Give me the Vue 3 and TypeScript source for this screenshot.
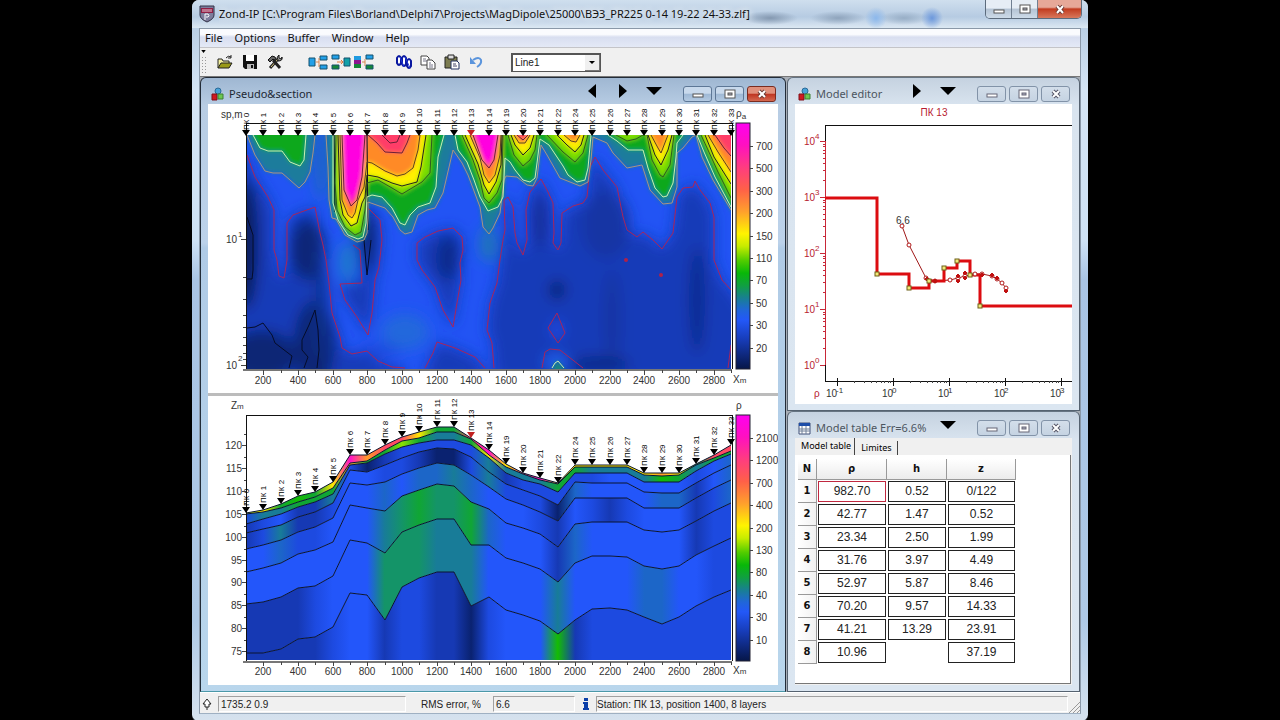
<script setup lang="ts">
import { ref } from 'vue'

type Pt = [number, number]

const line = ref('Line1')
const menus = ['File', 'Options', 'Buffer', 'Window', 'Help']

const parse = (s: string): Pt[] =>
  s.trim().split(/\s+/).map((p) => p.split(',').map(Number) as Pt)
const open = (s: string) => 'M' + s.trim().replace(/\s+/g, 'L')
const closed = (s: string) => open(s) + 'Z'
const capped = (s: string) => {
  const p = parse(s)
  return `M${p[0][0]},110L${s.trim().replace(/\s+/g, 'L')}L${p[p.length - 1][0]},110Z`
}

const stationNames = [
  0, 1, 2, 3, 4, 5, 6, 7, 8, 9, 10, 11, 12, 13, 14, 19, 20, 21, 22, 24, 25, 26, 27, 28, 29, 30, 31, 32, 33,
]
const sx = (i: number) => Math.round(246 + (i * 485) / 28)
const xLabels = Array.from({ length: 14 }, (_, i) => ({ x: sx(i * 2 + 1), text: String((i + 1) * 200) }))

/* resistivity levels of the pseudosection, from the outermost contour inwards */
interface Level { fill: string; stroke: string; shapes: string[] }
const levels: Level[] = [
  {
    fill: '#1c7c9c', stroke: '#a89482', shapes: [
      '247,135 255,155 265,171 273,173 282,173 290,180 299,188 305,182 310,172 313,153 315,135',
      '326,135 328,167 329,200 332,218 336,219 345,235 357,242 364,240 367,233 368,217 368,202 385,208 393,217 400,230 405,234 412,232 418,215 427,210 435,208 443,193 453,150 462,163 468,175 480,207 483,227 489,234 493,228 500,213 504,180 506,176 517,177 527,185 533,186 537,178 541,145 547,155 560,178 580,186 588,182 591,160 593,137 607,143 613,153 627,168 642,165 650,190 663,204 672,203 677,187 677,153 683,148 692,137 696,135 702,157 713,180 731,210 745,225',
    ],
  },
  {
    fill: '#10a81c', stroke: '#c9f0b0', shapes: [
      '253,135 260,148 268,151 282,151 290,162 300,166 304,160 306,135',
      '333,135 333,203 338,220 348,235 358,239 363,237 366,223 367,197 372,195 382,197 392,208 400,223 405,225 410,215 418,207 430,203 436,187 438,157 444,135',
      '455,135 458,150 467,162 474,180 480,197 488,211 498,207 503,197 505,158 510,162 515,170 523,180 530,182 535,178 537,163 540,139 549,145 563,166 568,175 577,182 585,180 588,168 591,135',
      '608,135 617,141 628,150 643,150 648,168 655,188 663,197 667,196 673,183 676,157 677,143 683,135',
      '697,135 704,152 715,177 731,207 745,222',
    ],
  },
  {
    fill: '#7ede00', stroke: '#2f5a20', shapes: [
      '336,135 335,183 337,210 345,227 355,235 361,232 365,210 367,183 378,180 392,188 402,194 412,188 422,182 430,173 432,135',
      '462,135 473,160 480,180 484,198 489,203 497,193 502,180 503,135',
      '508,135 514,155 523,166 530,160 535,150 537,135',
      '547,135 563,152 575,162 583,153 588,135',
      '616,135 627,141 636,139 643,135',
      '647,135 652,160 660,175 663,177 670,165 674,135',
      '701,135 708,150 718,172 731,198 745,214',
    ],
  },
  {
    fill: '#fff000', stroke: '#222', shapes: [
      '338,135 340,200 343,215 351,226 357,223 362,203 365,197 367,175 378,177 392,183 402,186 417,182 421,167 426,135',
      '465,135 478,164 484,185 489,194 496,182 501,165 502,135',
      '511,135 515,145 523,155 530,148 534,135',
      '557,135 567,145 575,152 581,145 584,135',
      '648,135 655,155 661,165 668,150 672,135',
      '705,135 714,157 731,184 745,200',
    ],
  },
  {
    fill: '#ff8a26', stroke: '#5e4020', shapes: [
      '340,135 342,200 348,215 352,218 355,213 358,200 364,187 367,162 372,163 385,171 397,176 405,174 413,168 418,150 420,135',
      '470,135 480,158 484,175 489,183 495,175 500,155 501,135',
      '514,135 519,143 525,143 530,135',
      '564,135 571,141 576,142 580,135',
      '651,135 658,148 661,153 666,140 668,135',
      '708,135 718,152 731,172 745,186',
    ],
  },
  {
    fill: '#ff3c68', stroke: '#6b1f38', shapes: [
      '342,135 344,190 351,206 357,200 362,177 365,135',
      '368,135 377,143 385,152 402,153 407,143 410,135',
      '473,135 482,160 489,168 494,160 498,135',
      '517,135 523,140 528,135',
      '715,135 724,148 731,156 745,168',
    ],
  },
  {
    fill: '#ff00e0', stroke: 'none', shapes: [
      '343,135 344,185 351,204 357,192 362,172 365,135',
      '475,135 483,158 489,166 494,155 498,135',
    ],
  },
]
const innerPeak = '382,135 390,143 397,142 400,135'

const edgeLeft = '247,155 255,177 268,197 274,210 274,250 277,260 279,276 284,278 287,260 287,223 293,215 315,207 320,233 323,245 326,260 329,283 332,313 340,337 342,348 352,354 367,351 378,361 392,367 405,368'
const edgeRight = '494,368 492,343 487,330 490,303 497,283 500,260 503,240 505,230 504,200 508,197 513,207 515,233 517,243 523,255 527,240 526,210 530,192 541,179 548,192 553,203 554,233 553,243 558,250 561,243 562,213 573,206 583,203 587,197 590,167 595,157 603,170 617,187 623,217 627,230 637,237 643,232 653,240 662,249 673,233 677,197 683,188 693,187 695,181 700,190 710,203 714,217 714,260 722,280 731,290'
const wedge = '353,245 360,250 362,283 340,284 345,300 357,317 368,335 372,313 375,280 379,267 382,240 380,220 368,208'
const pocket = '417,247 417,243 425,237 438,231 453,228 462,237 463,250 460,263 461,280 458,297 453,327 443,310 435,287 422,270 417,260'
const foot = '425,368 433,353 437,342 455,348 475,357 485,368'
const diamond = '557,313 565,333 558,343 548,328'
const vent = '542,368 545,352 550,349 560,350 583,368'

const darkAreas = [
  closed(edgeLeft + ' 405,380 230,380 230,150'),
  closed(edgeRight + ' 745,310 745,380 494,380'),
  closed(wedge), closed(pocket), closed(foot + ' 485,380 425,380'),
]
const redLines = [open(edgeLeft), open(edgeRight), open(wedge), closed(pocket), open(foot), closed(diamond), open(vent), open('728,368 731,345')]
const blackLines = [
  open('247,217 253,235 253,270 252,279 247,279'),
  open('247,328 255,327 263,323 272,335 275,343 292,356 289,368'),
  open('304,368 308,357 302,350 302,340 309,325 315,310 318,330 319,350 317,368'),
  open('364,240 367,275 371,240'),
  open('367,135 368,230'), open('334,135 335,212'),
]
const blobs = [
  { x: 246, y: 245, rx: 12, ry: 64, c: '#071a58' }, { x: 308, y: 250, rx: 18, ry: 30, c: '#0c2878' },
  { x: 314, y: 345, rx: 20, ry: 44, c: '#0c2674' }, { x: 262, y: 356, rx: 34, ry: 26, c: '#0c2674' },
  { x: 368, y: 238, rx: 5, ry: 32, c: '#061440' }, { x: 448, y: 258, rx: 12, ry: 22, c: '#0e2c8c' },
  { x: 557, y: 290, rx: 8, ry: 10, c: '#0a2470' }, { x: 540, y: 222, rx: 8, ry: 26, c: '#122f9c' },
  { x: 606, y: 225, rx: 24, ry: 34, c: '#1434a4' }, { x: 697, y: 300, rx: 8, ry: 54, c: '#102c90' },
  { x: 612, y: 320, rx: 9, ry: 50, c: '#1434a4' }, { x: 600, y: 364, rx: 30, ry: 8, c: '#102a88' },
  { x: 347, y: 262, rx: 7, ry: 20, c: '#1f80c4' }, { x: 405, y: 332, rx: 24, ry: 18, c: '#2068dc' },
  { x: 488, y: 244, rx: 7, ry: 18, c: '#1c7cac' }, { x: 321, y: 160, rx: 7, ry: 40, c: '#1c68c0' },
  { x: 557, y: 330, rx: 5, ry: 10, c: '#2450f0' }, { x: 556, y: 362, rx: 12, ry: 8, c: '#2360f0' },
  { x: 320, y: 300, rx: 5, ry: 60, c: '#0f3090' }, { x: 380, y: 350, rx: 20, ry: 6, c: '#1c48dc' },
]

/* layer boundaries of the model section, one height per station */
const bounds: number[][] = [
  [513, 510, 504, 496, 492, 482, 455, 455, 445, 437, 432, 427, 427, 438, 450, 464, 473, 478, 483, 465, 465, 465, 465, 473, 473, 473, 464, 455, 445],
  [514, 512, 508, 502, 497, 488, 463, 461, 450, 441, 438, 432, 432, 439, 455, 467, 474, 480, 484, 467, 467, 467, 467, 475, 476, 475, 465, 458, 451],
  [524, 519, 514, 507, 502, 494, 465, 463, 454, 447, 443, 440, 440, 445, 458, 473, 480, 484, 492, 473, 473, 473, 473, 482, 482, 482, 471, 461, 454],
  [533, 529, 525, 517, 512, 503, 470, 472, 465, 458, 452, 448, 449, 457, 472, 484, 490, 496, 505, 482, 483, 483, 483, 492, 493, 493, 483, 473, 465],
  [549, 545, 540, 532, 527, 518, 483, 485, 482, 474, 468, 463, 465, 475, 487, 499, 505, 512, 521, 498, 498, 498, 498, 508, 508, 508, 498, 488, 480],
  [572, 568, 563, 554, 550, 542, 505, 508, 511, 496, 490, 484, 486, 502, 509, 523, 528, 534, 547, 524, 522, 522, 522, 530, 532, 530, 521, 511, 503],
  [604, 602, 597, 588, 586, 576, 540, 543, 553, 532, 525, 519, 519, 545, 545, 558, 563, 569, 582, 563, 556, 556, 557, 566, 569, 566, 555, 546, 538],
  [653, 653, 649, 639, 637, 627, 593, 595, 620, 587, 578, 572, 572, 606, 597, 610, 615, 621, 634, 620, 609, 608, 610, 617, 624, 617, 606, 597, 590],
]
const palette: Record<string, string> = {
  n: '#0a2270', d: '#1639b4', b: '#1d4ae0', B: '#2356fa', s: '#1c66c8', t: '#187c98', e: '#149468',
  g: '#10a634', G: '#14bc04', l: '#8ae000', y: '#ffe800', o: '#ff9a28', r: '#ff4a64', m: '#ff10c8',
}
const layerTones = [
  'lygGgymorryggrmyrmyyyyyyoygrr',
  'bttgggogglgttgytttggttttGgtgg',
  'dbBddtbndbbbbbtdbbbbbBBBBBbBs',
  'dbtddbBBbbdnnbtbbbnsBBBBssdBs',
  'BBsbbBBBsBsstsBBBbdBbdbBBBdbs',
  'BBBBBBBBtegeegsBBBdsBBBBBBdbb',
  'ddddbBBBeeetttBBBBtBBBBssBBbb',
  'dddddbBBdbbddnbBBBGdbbbbbbbbb',
]
const layers = layerTones.map((tones, k) => {
  const top = bounds[k].map((y, i) => `${sx(i)},${y}`)
  const low = (bounds[k + 1] ?? bounds[k].map(() => 660)).map((y, i) => `${sx(i)},${y}`).reverse()
  return {
    id: `tone${k}`,
    stops: [...tones].map((c, i) => ({ at: `${(i * 100) / 28}%`, color: palette[c] })),
    points: [...top, ...low].join(' '),
    edge: top.join(' '),
  }
})

const scale = [
  [0, '#ff00f0'], [9, '#ff10c0'], [18, '#ff3c80'], [27, '#ff6048'], [36, '#ffa02c'], [45, '#fff400'], [50, '#c8ec00'],
  [56, '#50cc00'], [61, '#08b808'], [66, '#10a040'], [71, '#188090'], [76, '#2066d8'], [80, '#2358f8'], [88, '#173cb8'], [100, '#061648'],
] as [number, string][]
const barTop = ['700', '500', '300', '200', '150', '110', '70', '50', '30', '20']
const barLow = ['2100', '1200', '700', '400', '200', '130', '80', '40', '30', '10']
const barY = (base: number, i: number) => base + Math.round(i * 22.4)
const zAxis = Array.from({ length: 10 }, (_, i) => ({ y: 445 + Math.round(i * 22.9), text: String(120 - i * 5) }))

const depthTicks: number[] = []
for (let k = 2; k < 10; k++) depthTicks.push(Math.round(239 + 126 * Math.log10(k)))

/* model editor axes */
const yDecades = [4, 3, 2, 1, 0].map((p) => ({ p, y: 141 + (4 - p) * 56 }))
const xDecades = [-1, 0, 1, 2, 3].map((p) => ({ p, x: 836 + (p + 1) * 56 }))
const yMinor: number[] = []
const xMinor: number[] = []
for (let p = 1; p <= 4; p++) for (let k = 2; k < 10; k++) yMinor.push(Math.round(365 - (p - 1 + Math.log10(k)) * 56))
for (let p = 0; p < 5; p++) for (let k = 2; k < 10; k++) {
  const x = Math.round(836 + (p + Math.log10(k)) * 56)
  if (x < 1071) xMinor.push(x)
}
const nodes: Pt[] = [[876, 274], [908, 288], [928, 281], [943, 268], [956, 261], [969, 275], [979, 306]]
const curve: Pt[] = [[901, 226], [908, 245], [925, 278], [934, 281], [949, 280], [957, 278], [964, 276], [974, 274], [981, 274], [991, 276], [996, 279], [1001, 283], [1005, 288]]
const marks: Pt[] = [[926, 279], [934, 281], [957, 281], [957, 276], [964, 273], [964, 278], [981, 275], [991, 275], [996, 278], [1005, 291]]
const curvePoints = curve.map((p) => p.join(',')).join(' ')

const rows = [
  ['982.70', '0.52', '0/122'], ['42.77', '1.47', '0.52'], ['23.34', '2.50', '1.99'], ['31.76', '3.97', '4.49'],
  ['52.97', '5.87', '8.46'], ['70.20', '9.57', '14.33'], ['41.21', '13.29', '23.91'], ['10.96', '', '37.19'],
]
const controls = ['min', 'max', 'close'] as const
const labels = { min: 'Minimize', max: 'Maximize', close: 'Close' }
const panes = { section: ['left', 'right', 'down'], editor: ['right', 'down'], table: ['down'] }
const arrowShape: Record<string, string> = { left: '12,1 4,8 12,15', right: '4,1 12,8 4,15', down: '0,4 16,4 8,12' }
</script>

<template>
  <main class="desktop">
    <div class="app">
      <header class="titlebar">
        <svg class="app-icon" viewBox="0 0 16 18" aria-hidden="true">
          <path d="M1 1h14v9q0 4-7 7Q1 14 1 10z" fill="#7d7d9c" stroke="#333348" />
          <path d="M2 3h12v5H2z" fill="#8f1f44" />
          <path d="M4 4v3M6 4v3M8 4v3M10 4v3M12 4v3" stroke="#e8c8d4" />
          <path d="M6 15V9h3q2 2 0 3H7" fill="none" stroke="#fff" />
        </svg>
        <h1>Zond-IP [C:\Program Files\Borland\Delphi7\Projects\MagDipole\25000\ВЭЗ_PR225 0-14 19-22 24-33.zlf]</h1>
        <div class="sys">
          <button v-for="c in controls" :key="c" type="button" :class="c" :aria-label="labels[c]">
            <svg viewBox="0 0 14 12" aria-hidden="true">
              <rect v-if="c === 'min'" x="2" y="7" width="10" height="3" fill="#fff" stroke="#555" />
              <g v-else-if="c === 'max'" stroke="#555"><rect x="2" y="2" width="10" height="8" fill="#fff" /><rect x="5" y="5" width="4" height="2" fill="#aab" /></g>
              <g v-else fill="none"><path d="M4 3l6 7M10 3l-6 7" stroke="#6a3a34" stroke-width="4" /><path d="M4 3l6 7M10 3l-6 7" stroke="#fff" stroke-width="2" /></g>
            </svg>
          </button>
        </div>
      </header>

      <div class="client">
        <nav class="menu">
          <button v-for="m in menus" :key="m" type="button">{{ m }}</button>
        </nav>

        <div class="toolbar">
          <div class="grip"><svg viewBox="0 0 6 4" aria-hidden="true"><path d="M0 0h6L3 4z" /></svg><i></i></div>
          <div class="tools files">
            <button type="button" aria-label="Open"><svg viewBox="0 0 16 16"><path d="M1 14V5h4l1 2h6v3" fill="#f4f0a0" stroke="#222" /><path d="M1 14l3-5h11l-3 5z" fill="#9a9a18" stroke="#222" /><path d="M9 4q2-3 5-1M14 1v3h-3" fill="none" stroke="#222" /></svg></button>
            <button type="button" aria-label="Save"><svg viewBox="0 0 16 16"><path d="M1 1h14v14H3l-2-2z" fill="#111" /><path d="M4 1h8v6H4z" fill="#fff" /><path d="M5 10h7v5H5z" fill="#bbb" /><path d="M9 11h2v3H9z" fill="#111" /></svg></button>
            <button type="button" aria-label="Tools"><svg viewBox="0 0 16 16"><path d="M3 14L11 5" stroke="#222" stroke-width="3" /><path d="M4 13l7-8" stroke="#d8c880" /><path d="M13 14L6 6" stroke="#222" stroke-width="3" /><path d="M1 6l4-4 3 1 1 2-2 1-1-1-3 3z" fill="#666" stroke="#111" /><path d="M11 6q-2-3 1-5v3l2 1 1-2q1 4-4 4z" fill="#999" stroke="#111" /></svg></button>
          </div>
          <div class="tools blocks">
            <button type="button" aria-label="Split block"><svg viewBox="0 0 20 16"><g stroke="#14506c"><path d="M1 4h6v8H1z" fill="#22a0e8" /><path d="M12 2h7v4h-7zM12 11h7v4h-7z" fill="#22a0e8" /></g><path d="M8 8h3M11 4v9" stroke="#d88850" /></svg></button>
            <button type="button" aria-label="Join blocks"><svg viewBox="0 0 20 16"><g stroke="#14506c"><path d="M1 1h7v4H1z" fill="#22a0e8" /><path d="M13 4h6v8h-6z" fill="#12a0a8" /><path d="M1 11h7v4H1z" fill="#148838" /></g><path d="M6 8h6M10 6l2 2-2 2" fill="none" stroke="#e07838" /></svg></button>
            <button type="button" aria-label="Layer blocks"><svg viewBox="0 0 20 16"><path d="M0 2h7v4H0z" fill="#209ae0" /><path d="M0 6h7v4H0z" fill="#8c1890" /><path d="M0 10h7v4H0z" fill="#148838" /><g stroke="#14506c"><path d="M12 1h7v4h-7z" fill="#22a0e8" /><path d="M12 11h7v4h-7z" fill="#148838" /></g><path d="M8 8h3M11 5v7" stroke="#d88850" /></svg></button>
          </div>
          <div class="tools edit">
            <button type="button" aria-label="Curves"><svg viewBox="0 0 16 16"><g fill="#fff" stroke="#0a18a0" stroke-width="2"><path d="M1 9V4q2-4 4 0v5q-2 4-4 0z" /><path d="M6 10V4q2-4 4 0v6q-2 4-4 0z" /><path d="M11 12V7q2-4 4 0v5q-2 4-4 0z" /></g><path d="M4 3l4 10M9 3l5 11" stroke="#2038d8" /></svg></button>
            <button type="button" aria-label="Copy"><svg viewBox="0 0 16 16"><g fill="#fff" stroke="#444"><path d="M1 2h6l2 2v7H1z" /><path d="M7 6h5l3 3v6H7z" /></g><path d="M3 5h3M3 7h4M9 9h2M9 11h4M9 13h4" stroke="#778" /></svg></button>
            <button type="button" aria-label="Paste"><svg viewBox="0 0 16 16"><path d="M1 3h12v11H1z" fill="#7c7c50" stroke="#222" /><path d="M4 1h6v4H4z" fill="#ddd" stroke="#222" /><path d="M7 7h6l2 2v6H7z" fill="#fff" stroke="#223060" /><path d="M9 10h3M9 12h4" stroke="#446" /></svg></button>
            <button type="button" aria-label="Undo"><svg viewBox="0 0 16 16"><path d="M5 6q6-4 8 0 1 4-4 7" fill="none" stroke="#5a94dc" stroke-width="2" /><path d="M2 3v7h6z" fill="#5a94dc" /></svg></button>
          </div>
          <div class="combo">
            <select v-model="line" aria-label="Line"><option>Line1</option></select>
            <span><svg viewBox="0 0 8 4" aria-hidden="true"><path d="M0 0h8L4 4z" /></svg></span>
          </div>
        </div>

        <div class="mdi">
          <section class="child active">
            <header>
              <svg class="cubes" viewBox="0 0 13 14" aria-hidden="true"><circle cx="7" cy="4" r="3" fill="#49a3d8" stroke="#2a6a98" /><path d="M1 7h5v6H1z" fill="#d01820" stroke="#801018" /><path d="M7 7h5v5H7z" fill="#6cc850" stroke="#3c8030" /></svg>
              <h2>Pseudo&amp;section</h2>
              <div class="arrows"><button v-for="a in panes.section" :key="a" type="button" :aria-label="a"><svg viewBox="0 0 16 16"><polygon :points="arrowShape[a]" /></svg></button></div>
              <div class="ctl">
                <button v-for="c in controls" :key="c" type="button" :class="c" :aria-label="labels[c]">
                  <svg viewBox="0 0 14 12" aria-hidden="true">
                    <rect v-if="c === 'min'" x="2" y="6" width="10" height="3" fill="#fff" stroke="#555" />
                    <g v-else-if="c === 'max'" stroke="#555"><rect x="2" y="2" width="10" height="8" fill="#fff" /><rect x="5" y="5" width="4" height="2" fill="#aab" /></g>
                    <g v-else fill="none"><path d="M4 3l6 6M10 3l-6 6" stroke="#6a3a34" stroke-width="4" /><path d="M4 3l6 6M10 3l-6 6" stroke="#fff" stroke-width="2" /></g>
                  </svg>
                </button>
              </div>
            </header>

            <div class="plots">
              <svg class="plot" viewBox="208 104 570 289" role="img" aria-label="Pseudosection">
                <defs>
                  <clipPath id="heat"><rect x="246" y="135" width="485" height="234" /></clipPath>
                  <filter id="wide" filterUnits="userSpaceOnUse" x="180" y="80" width="620" height="340"><feGaussianBlur stdDeviation="7" /></filter>
                  <filter id="fine" filterUnits="userSpaceOnUse" x="180" y="80" width="620" height="340"><feGaussianBlur stdDeviation="2" /></filter>
                  <linearGradient id="scale" x2="0" y2="1"><stop v-for="s in scale" :key="s[0]" :offset="s[0] + '%'" :stop-color="s[1]" /></linearGradient>
                </defs>
                <g clip-path="url(#heat)">
                  <rect x="246" y="135" width="485" height="234" fill="#2254f4" />
                  <g filter="url(#wide)">
                    <path v-for="(d, i) in darkAreas" :key="i" :d="d" fill="#163ab8" />
                    <ellipse v-for="(b, i) in blobs" :key="'b' + i" :cx="b.x" :cy="b.y" :rx="b.rx" :ry="b.ry" :fill="b.c" />
                  </g>
                  <g filter="url(#fine)">
                    <template v-for="(l, i) in levels" :key="i"><path v-for="(s, j) in l.shapes" :key="j" :d="capped(s)" :fill="l.fill" /></template>
                    <path d="M552 372L555 363L558 361L566 372Z" fill="#188878" />
                  </g>
                  <path v-for="(d, i) in redLines" :key="'r' + i" :d="d" class="red" />
                  <g fill="#b02048"><circle cx="626" cy="260" r="2" /><circle cx="661" cy="275" r="2" /></g>
                  <path v-for="(d, i) in blackLines" :key="'k' + i" :d="d" class="black" />
                  <g fill="none" stroke-linejoin="round">
                    <template v-for="(l, i) in levels" :key="i"><path v-for="(s, j) in l.shapes" :key="j" :d="open(s)" :stroke="l.stroke" /></template>
                    <path :d="open(innerPeak)" stroke="#6b1f38" />
                    <path d="M552 368L555 363L558 361L564 368" stroke="#c9f0b0" />
                  </g>
                </g>
                <g class="axis"><path d="M246 123H732M246 123V369M732 123V369" /><path d="M243 370H732" class="thick" /></g>
                <path v-for="y in depthTicks" :key="y" :d="`M243 ${y}h3`" class="tick" />
                <path d="M241 239h5M241 365h5" class="tick" />
                <g v-for="(n, i) in stationNames" :key="n">
                  <text class="station" :transform="`translate(${sx(i) + 3} 130) rotate(-90)`">ПК {{ n }}</text>
                  <path :d="`M${sx(i) - 4} 130h8l-4 6z`" :fill="n === 13 ? '#c02020' : '#000'" />
                </g>
                <text x="221" y="118">sp,m</text>
                <text x="226" y="243">10</text><text x="238" y="237" class="sup">1</text>
                <text x="226" y="369">10</text><text x="238" y="361" class="sup">2</text>
                <g v-for="(l, i) in xLabels" :key="l.x"><path :d="`M${l.x} 370v5M${sx(i * 2 + 2)} 370v3`" class="tick" /><text :x="l.x" y="384" text-anchor="middle">{{ l.text }}</text></g>
                <text x="733" y="383">X<tspan class="unit">m</tspan></text>
                <text x="736" y="117">ρ<tspan class="unit" dy="2">a</tspan></text>
                <rect x="736" y="123" width="14" height="246" fill="url(#scale)" stroke="#223" />
                <g v-for="(t, i) in barTop" :key="t"><path :d="`M750 ${barY(146, i)}h3`" class="tick" /><text x="756" :y="barY(150, i)">{{ t }}</text></g>
              </svg>

              <div class="splitter"></div>

              <svg class="plot" viewBox="208 396 570 289" role="img" aria-label="Model section">
                <defs>
                  <linearGradient v-for="l in layers" :id="l.id" :key="l.id" gradientUnits="userSpaceOnUse" x1="246" x2="731" y1="0" y2="0"><stop v-for="s in l.stops" :key="s.at" :offset="s.at" :stop-color="s.color" /></linearGradient>
                </defs>
                <polygon v-for="l in layers" :key="l.id" :points="l.points" :fill="`url(#${l.id})`" />
                <polyline v-for="l in layers" :key="'e' + l.id" :points="l.edge" class="edge" />
                <g class="axis"><path d="M246 415H732M246 415V661M732 415V661" /><path d="M243 662H732" class="thick" /></g>
                <g v-for="(n, i) in stationNames" :key="n">
                  <text class="station" :transform="`translate(${sx(i) + 3} ${bounds[0][i] - 7}) rotate(-90)`">ПК {{ n }}</text>
                  <path :d="`M${sx(i) - 4} ${bounds[0][i] - 6}h8l-4 6z`" :fill="n === 13 ? '#c02020' : '#000'" />
                </g>
                <text x="231" y="409">Z<tspan class="unit">m</tspan></text>
                <g v-for="z in zAxis" :key="z.y"><path :d="`M242 ${z.y}h4M244 ${z.y - 11}h2`" class="tick" /><text x="242" :y="z.y + 4" text-anchor="end">{{ z.text }}</text></g>
                <g v-for="(l, i) in xLabels" :key="l.x"><path :d="`M${l.x} 662v4M${sx(i * 2 + 2)} 662v3`" class="tick" /><text :x="l.x" y="675" text-anchor="middle">{{ l.text }}</text></g>
                <text x="733" y="674">X<tspan class="unit">m</tspan></text>
                <text x="736" y="409">ρ</text>
                <rect x="736" y="415" width="14" height="246" fill="url(#scale)" stroke="#223" />
                <g v-for="(t, i) in barLow" :key="t"><path :d="`M750 ${barY(438, i)}h3`" class="tick" /><text x="756" :y="barY(442, i)">{{ t }}</text></g>
              </svg>
            </div>
          </section>

          <div class="side">
            <section class="child">
              <header>
                <svg class="cubes" viewBox="0 0 13 14" aria-hidden="true"><circle cx="7" cy="4" r="3" fill="#49a3d8" stroke="#2a6a98" /><path d="M1 7h5v6H1z" fill="#d01820" stroke="#801018" /><path d="M7 7h5v5H7z" fill="#6cc850" stroke="#3c8030" /></svg>
                <h2>Model editor</h2>
                <div class="arrows"><button v-for="a in panes.editor" :key="a" type="button" :aria-label="a"><svg viewBox="0 0 16 16"><polygon :points="arrowShape[a]" /></svg></button></div>
                <div class="ctl">
                  <button v-for="c in controls" :key="c" type="button" :aria-label="labels[c]">
                    <svg viewBox="0 0 14 12" aria-hidden="true">
                      <rect v-if="c === 'min'" x="2" y="6" width="10" height="3" fill="#fff" stroke="#667" />
                      <g v-else-if="c === 'max'" stroke="#667"><rect x="2" y="2" width="10" height="8" fill="#fff" /><rect x="5" y="5" width="4" height="2" fill="#aab" /></g>
                      <g v-else fill="none"><path d="M4 3l6 6M10 3l-6 6" stroke="#556" stroke-width="4" /><path d="M4 3l6 6M10 3l-6 6" stroke="#fff" stroke-width="2" /></g>
                    </svg>
                  </button>
                </div>
              </header>
              <svg class="plot fill" viewBox="794 104 277 300" role="img" aria-label="Model editor plot">
                <text x="933" y="116" text-anchor="middle" class="crimson">ПК 13</text>
                <g class="axis"><path d="M824 125H1071M824 125V381H1071" /></g>
                <path d="M824 141V365" class="redaxis" />
                <path v-for="y in yMinor" :key="y" :d="`M822 ${y}h2`" class="redaxis" />
                <g v-for="d in yDecades" :key="d.p"><path :d="`M819 ${d.y}h5`" class="redaxis" /><text x="803" :y="d.y + 4" class="crimson">10</text><text x="814" :y="d.y - 2" class="crimson sup">{{ d.p }}</text></g>
                <path v-for="x in xMinor" :key="x" :d="`M${x} 381v2`" class="tick" />
                <g v-for="d in xDecades" :key="d.p"><path :d="`M${d.x} 378v8`" class="axis" /><text :x="d.x - 11" y="397">10</text><text :x="d.x - 1" y="393" class="sup">{{ d.p }}</text></g>
                <text x="813" y="397" class="crimson">ρ</text>
                <polyline :points="curvePoints" fill="none" stroke="#a01818" />
                <path d="M824 198H876V274H908V288H928V281H943V268H956V261H969V275H979V306H1071" fill="none" stroke="#dc0c10" stroke-width="3" />
                <circle v-for="(p, i) in curve" :key="i" :cx="p[0]" :cy="p[1]" r="2" fill="#fff" stroke="#b01818" />
                <path v-for="(p, i) in marks" :key="'m' + i" :d="`M${p[0] - 2} ${p[1]}l2-2 2 2-2 2z`" fill="#c01010" stroke="#c01010" />
                <rect v-for="(p, i) in nodes" :key="'n' + i" :x="p[0] - 2" :y="p[1] - 2" width="4" height="4" fill="#f4e878" stroke="#6c6018" />
                <text x="895" y="224">6.6</text>
              </svg>
            </section>

            <section class="child">
              <header>
                <svg class="cubes" viewBox="0 0 13 14" aria-hidden="true"><path d="M1 2h11v11H1z" fill="#fff" stroke="#405078" /><path d="M1 2h11v3H1z" fill="#1e4ea8" /><path d="M1 8h11M1 10h11M4 5v8M8 5v8" stroke="#708098" /></svg>
                <h2>Model table Err=6.6%</h2>
                <div class="arrows"><button v-for="a in panes.table" :key="a" type="button" :aria-label="a"><svg viewBox="0 0 16 16"><polygon :points="arrowShape[a]" /></svg></button></div>
                <div class="ctl">
                  <button v-for="c in controls" :key="c" type="button" :aria-label="labels[c]">
                    <svg viewBox="0 0 14 12" aria-hidden="true">
                      <rect v-if="c === 'min'" x="2" y="6" width="10" height="3" fill="#fff" stroke="#667" />
                      <g v-else-if="c === 'max'" stroke="#667"><rect x="2" y="2" width="10" height="8" fill="#fff" /><rect x="5" y="5" width="4" height="2" fill="#aab" /></g>
                      <g v-else fill="none"><path d="M4 3l6 6M10 3l-6 6" stroke="#556" stroke-width="4" /><path d="M4 3l6 6M10 3l-6 6" stroke="#fff" stroke-width="2" /></g>
                    </svg>
                  </button>
                </div>
              </header>
              <div class="tabbed">
                <div class="tabs" role="tablist">
                  <button type="button" role="tab" aria-selected="true">Model table</button>
                  <button type="button" role="tab" aria-selected="false">Limites</button>
                </div>
                <div class="sheet">
                  <table>
                    <colgroup><col class="c-n" /><col class="c-r" /><col class="c-h" /><col class="c-z" /></colgroup>
                    <thead><tr><th>N</th><th>ρ</th><th>h</th><th>z</th></tr></thead>
                    <tbody>
                      <tr v-for="(r, i) in rows" :key="i">
                        <th scope="row">{{ i + 1 }}</th>
                        <td v-for="(v, j) in r" :key="j"><div v-if="v" :class="{ picked: i === 0 && j === 0 }">{{ v }}</div></td>
                      </tr>
                    </tbody>
                  </table>
                </div>
              </div>
            </section>
          </div>
        </div>

        <footer class="status">
          <svg class="pin" viewBox="0 0 10 12" aria-hidden="true"><path d="M5 1l4 5H7v3H3V6H1z" fill="#fff" stroke="#222" /><path d="M5 9v3" stroke="#222" /></svg>
          <span class="field pos">1735.2 0.9</span>
          <span class="label">RMS error, %</span>
          <span class="field err">6.6</span>
          <svg class="info" viewBox="0 0 8 12" aria-hidden="true"><path d="M2 0h4v3H2zM1 4h5v6h1v2H1v-2h1V6H1z" fill="#0c3fa8" /></svg>
          <span class="field msg">Station: ПК 13, position 1400, 8 layers</span>
          <svg class="sizer" viewBox="0 0 12 12" aria-hidden="true"><path d="M1 12L12 1M5 12l7-7M9 12l3-3" stroke="#999" /></svg>
        </footer>
      </div>
    </div>
  </main>
</template>

<style>
html, body { background: #000; }
</style>

<style scoped>
* { box-sizing: border-box; }
button { font: inherit; color: inherit; border: 0; padding: 0; background: none; display: flex; align-items: center; justify-content: center; }
h1, h2 { margin: 0; font-weight: 400; white-space: nowrap; }
.desktop { min-height: 100vh; display: flex; justify-content: center; background: #000; font-family: "Noto Sans", "Open Sans", sans-serif; }
.app {
  width: 70%; min-height: 100vh; display: flex; flex-direction: column; padding: 0 7px 7px;
  border-radius: 7px; border-bottom: 1px solid #47525e;
  background: linear-gradient(180deg, #d9e6f2 0, #b9cee4 26px, #d5e5f5 90px, #cfe2f5 240px, #a9c4e4 280px, #aec9e6 620px, #d6e2ee 100%);
}
.titlebar {
  height: 28px; display: flex; align-items: center; margin: 0 -7px; padding: 0 6px 0 7px; border-radius: 7px 7px 0 0;
  background:
    radial-gradient(circle at 740px 18px, #6c98dc 0, transparent 11px),
    radial-gradient(circle at 684px 18px, #8cb8ec 0, transparent 11px),
    radial-gradient(ellipse 24px 7px at 712px 18px, #98aec6 0, transparent 100%),
    radial-gradient(ellipse 28px 7px at 646px 18px, #8fa4bc 0, transparent 100%),
    radial-gradient(ellipse 28px 7px at 578px 18px, #8498b0 0, transparent 100%),
    linear-gradient(180deg, #cfdfee, #b6cbe2 60%, #dce8f3);
}
.app-icon { width: 16px; height: 18px; margin-right: 4px; flex: none; }
.titlebar h1 { font-size: 11px; line-height: 24px; flex: 1; min-width: 0; overflow: hidden; color: #111; text-shadow: 0 0 6px #fff, 0 0 8px #fff; }
.sys { display: flex; align-self: flex-start; height: 19px; border: 1px solid #5c6b7c; border-top: 0; border-radius: 0 0 5px 5px; overflow: hidden; }
.sys button { width: 26px; background: linear-gradient(#e6edf5 45%, #b4c3d4 50%, #cddbe8); border-right: 1px solid #718092; }
.sys .close { width: 43px; border: 0; background: linear-gradient(#e6a898 40%, #c23c20 50%, #d8785c); }
.sys svg, .ctl svg { width: 14px; height: 12px; }
.client { flex: 1; display: flex; flex-direction: column; background: #f0f0f0; border: 1px solid #8a98a8; border-bottom-color: #9fb0c2; }
.menu { height: 19px; display: flex; align-items: center; gap: 12px; padding-left: 5px; font-size: 11px; line-height: 18px; color: #111; background: linear-gradient(#fafbfe 30%, #d8def0 45%, #e4e9f6); border-bottom: 1px solid #c4c4c8; }
.toolbar { height: 28px; display: flex; align-items: center; background: #f0f0f0; }
.grip { width: 6px; margin: 0 11px 0 0; height: 24px; display: flex; flex-direction: column; align-items: center; gap: 3px; }
.grip svg { width: 5px; height: 3px; flex: none; }
.grip i { flex: 1; width: 5px; background: radial-gradient(circle, #999 1px, transparent 1px) 0 0 / 3px 3px; }
.tools { display: flex; align-items: center; }
.tools svg { display: block; height: 16px; }
.files { gap: 9px; }
.files svg, .edit svg { width: 16px; }
.blocks { gap: 3px; margin-left: 25px; }
.blocks svg { width: 20px; }
.edit { gap: 8px; margin-left: 22px; }
.combo { position: relative; width: 90px; height: 19px; margin-left: 27px; }
.combo select { display: block; appearance: none; width: 100%; height: 100%; margin: 0; padding: 0 18px 0 2px; border: 1px solid #555; border-width: 2px 1px 1px 2px; border-radius: 0; background: #fff; color: #222; font: 10px "Liberation Sans", Arial, sans-serif; }
.combo span { position: absolute; right: 1px; top: 2px; bottom: 1px; width: 15px; display: flex; align-items: center; justify-content: center; background: #f0f0f0; border: 1px solid #777; border-width: 0 1px 1px 0; pointer-events: none; }
.combo svg { width: 6px; height: 3px; }
.mdi { flex: 1; display: grid; grid-template-columns: 2fr 1fr; gap: 1px; background: #a8aeb6; border-top: 1px solid #777; }
.side { display: flex; flex-direction: column; }
.side .child:last-child { flex: 1; }
.child { min-width: 0; display: flex; flex-direction: column; padding: 0 7px 6px; border: 1px solid #556270; border-top-color: #667482; border-radius: 6px 6px 0 0; background: linear-gradient(#c5d2e0, #d9e4ef 28px, #dbe6f1); color: #4c5560; }
.child.active { background: linear-gradient(#9fb7d2, #b8cde4 28px, #bcd2ea 165px, #b0cbe6 170px, #b9d6ec); border-color: #222c38; border-bottom-color: #4b98a8; color: #1d2834; }
.child header { height: 26px; flex: none; display: flex; align-items: center; padding: 5px 2px 0 3px; }
.cubes { width: 13px; height: 14px; margin-right: 5px; flex: none; }
.child h2 { font-size: 11px; line-height: 20px; flex: 1; }
.arrows { display: flex; gap: 15px; margin-right: 21px; height: 16px; align-self: flex-start; color: #000; }
.arrows svg { display: block; width: 16px; height: 16px; }
.ctl { display: flex; gap: 3px; }
.ctl button { width: 29px; height: 16px; border: 1px solid #8293a8; border-radius: 3px; background: linear-gradient(#d3deea, #c5d3e2); }
.active .ctl button { border-color: #5d7796; background: linear-gradient(#c8d9ec 45%, #9eb8d5 50%, #b3cae2); }
.active .ctl .close { border-color: #7a2c20; background: linear-gradient(#e0907c 45%, #be3420 50%, #d46850); }
.plots { flex: 1; background: #fff; }
.splitter { height: 3px; background: #bcbcbc; }
.plot { display: block; width: 100%; height: auto; background: #fff; font-family: "Liberation Sans", Arial, sans-serif; font-size: 10px; fill: #333; }
.plot .station { font-size: 8px; fill: #000; }
.plot .sup, .plot .unit { font-size: 8px; }
.plot .crimson { fill: #b81c30; }
.axis path, path.axis { fill: none; stroke: #111; stroke-width: 1; shape-rendering: crispEdges; }
.axis .thick { stroke: #777; stroke-width: 2; }
.tick { stroke: #444; fill: none; shape-rendering: crispEdges; }
.redaxis { stroke: #c82838; fill: none; shape-rendering: crispEdges; }
.red { fill: none; stroke: #a8245c; stroke-linejoin: round; }
.black { fill: none; stroke: #050c28; }
.edge { fill: none; stroke: #0a1430; }
.tabbed { flex: 1; display: flex; flex-direction: column; background: #f0f0f0; }
.tabs { display: flex; align-items: flex-end; height: 17px; font-size: 9px; line-height: 14px; color: #000; }
.tabs button { height: 14px; padding: 0 5px 0 6px; border-right: 1px solid #444; }
.tabs button:first-child { height: 17px; padding: 0 3px 2px 6px; }
.sheet { flex: 1; padding: 4px 0 0 3px; background: #fff; border: 1px solid #777; border-width: 0 1px 1px 0; margin: 0 1px 1px 0; }
table { table-layout: fixed; width: 218px; border-collapse: separate; border-spacing: 0; font: 12px/18px "Liberation Sans", Arial, sans-serif; color: #222; }
.c-n { width: 19px; } .c-r { width: 70px; } .c-h { width: 60px; } .c-z { width: 69px; }
th { padding: 0; font: bold 10px/18px "DejaVu Sans", sans-serif; color: #111; background: linear-gradient(90deg, #fff, #f1f1f1); border-right: 1px solid #999; border-bottom: 1px solid #999; text-align: center; }
thead th { height: 21px; background: linear-gradient(#fff, #ececec); }
td { padding: 1px; height: 23px; text-align: center; }
td div { height: 21px; border: 1px solid #222; line-height: 19px; background: #fff; }
td .picked { border-color: #c02840; }
.status { height: 21px; flex: none; display: flex; align-items: center; padding: 2px 0 0; border-top: 1px solid #fff; background: #f0f0f0; font: 10px/15px "Liberation Sans", Arial, sans-serif; color: #222; }
.pin { width: 10px; height: 12px; margin: 0 6px 0 2px; flex: none; }
.field { height: 16px; padding-left: 2px; border: 1px solid; border-color: #a0a0a0 #fff #fff #a0a0a0; white-space: nowrap; }
.pos { width: 188px; }
.label { padding: 0 12px 0 15px; white-space: nowrap; }
.err { width: 82px; }
.info { width: 8px; height: 12px; margin: 0 6px 0 7px; flex: none; }
.msg { flex: 1; padding-left: 0; }
.sizer { width: 12px; height: 12px; align-self: flex-end; flex: none; }
</style>
